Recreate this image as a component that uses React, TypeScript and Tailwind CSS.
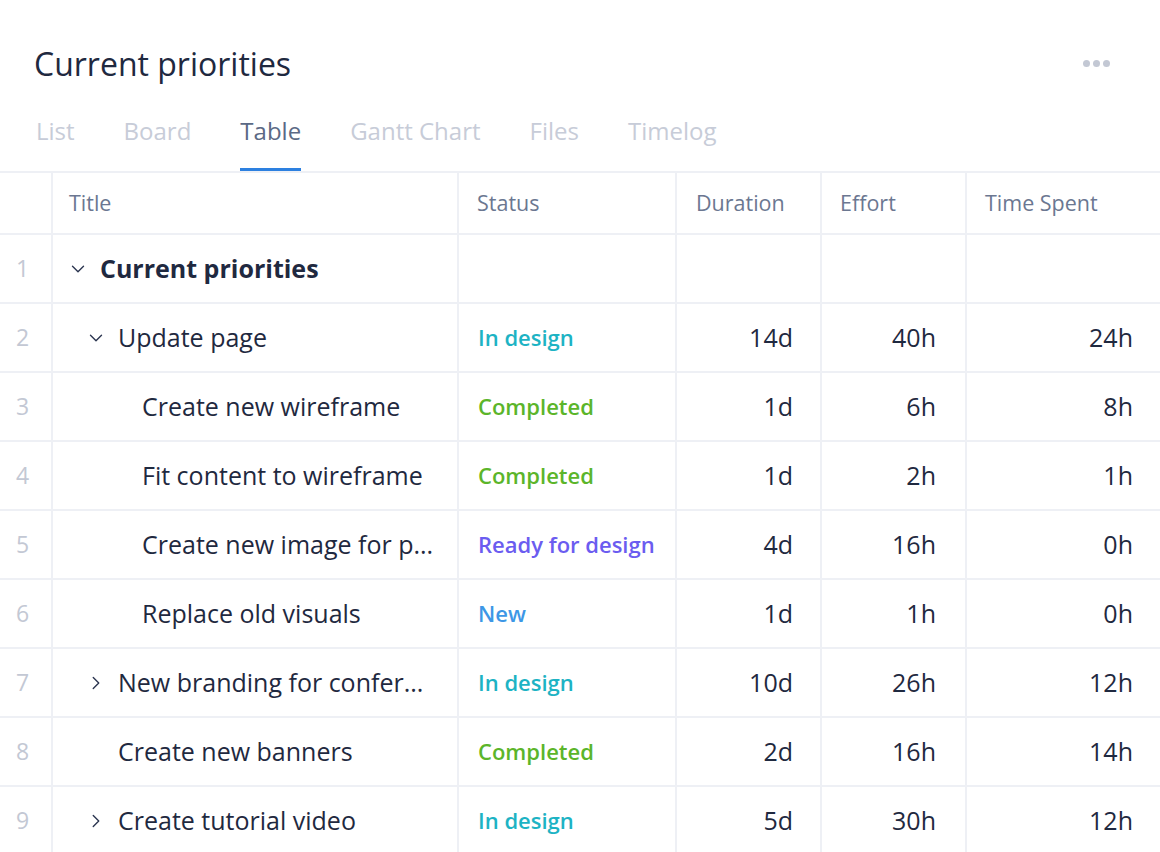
import { ChevronDown, ChevronRight } from 'lucide-react';

type Row = {
  n: number;
  title: string;
  level: 0 | 1 | 2;
  chevron?: 'down' | 'right';
  bold?: boolean;
  status?: string;
  dur?: string;
  eff?: string;
  spent?: string;
};

const rows: Row[] = [
  { n: 1, title: 'Current priorities', level: 0, chevron: 'down', bold: true },
  { n: 2, title: 'Update page', level: 1, chevron: 'down', status: 'In design', dur: '14d', eff: '40h', spent: '24h' },
  { n: 3, title: 'Create new wireframe', level: 2, status: 'Completed', dur: '1d', eff: '6h', spent: '8h' },
  { n: 4, title: 'Fit content to wireframe', level: 2, status: 'Completed', dur: '1d', eff: '2h', spent: '1h' },
  { n: 5, title: 'Create new image for p...', level: 2, status: 'Ready for design', dur: '4d', eff: '16h', spent: '0h' },
  { n: 6, title: 'Replace old visuals', level: 2, status: 'New', dur: '1d', eff: '1h', spent: '0h' },
  { n: 7, title: 'New branding for confer...', level: 1, chevron: 'right', status: 'In design', dur: '10d', eff: '26h', spent: '12h' },
  { n: 8, title: 'Create new banners', level: 1, status: 'Completed', dur: '2d', eff: '16h', spent: '14h' },
  { n: 9, title: 'Create tutorial video', level: 1, chevron: 'right', status: 'In design', dur: '5d', eff: '30h', spent: '12h' },
];

const statusColor: Record<string, string> = {
  'In design': 'text-[#1db3c4]',
  Completed: 'text-[#5bb52a]',
  'Ready for design': 'text-[#6b5cf0]',
  New: 'text-[#3d97e6]',
};

const cols = 'grid grid-cols-[53px_406px_218px_145px_145px_193px]';
const cell = 'border-r-2 border-[#eef0f5] last:border-r-0';

export default function App() {
  return (
    <div className="w-[1160px] h-[852px] overflow-hidden bg-white text-[#1f2940]" style={{ fontFamily: '"Open Sans", sans-serif' }}>
      <div className="flex items-start justify-between px-[34px] pt-[42px]">
        <h1 className="text-[32px] leading-[44px]">Current priorities</h1>
        <div className="flex gap-[3px] pt-[18px] pr-[16px]">
          <span className="w-[7px] h-[7px] rounded-full bg-[#c3c8d4]" />
          <span className="w-[7px] h-[7px] rounded-full bg-[#c3c8d4]" />
          <span className="w-[7px] h-[7px] rounded-full bg-[#c3c8d4]" />
        </div>
      </div>
      <div className="flex gap-[49px] px-[36px] mt-[27px] text-[24px] text-[#c7ccd8]">
        {['List', 'Board', 'Table', 'Gantt Chart', 'Files', 'Timelog'].map((t) => (
          <div key={t} className={`h-[58px] border-b-[3px] ${t === 'Table' ? 'border-[#2d80e0] text-[#5b6985]' : 'border-transparent'}`}>
            {t}
          </div>
        ))}
      </div>
      <div className="border-t-2 border-[#eef0f5]">
        <div className={`${cols} h-[62px] text-[21.5px] text-[#6b7791] border-b-2 border-[#eef0f5]`}>
          <div className={cell} />
          <div className={`${cell} flex items-center pl-[16px]`}>Title</div>
          <div className={`${cell} flex items-center pl-[18px]`}>Status</div>
          <div className={`${cell} flex items-center pl-[19px]`}>Duration</div>
          <div className={`${cell} flex items-center pl-[18px]`}>Effort</div>
          <div className={`${cell} flex items-center pl-[18px]`}>Time Spent</div>
        </div>
        {rows.map((r) => (
          <div key={r.n} className={`${cols} h-[69px] text-[25px] border-b-2 border-[#eef0f5]`}>
            <div className={`${cell} flex items-center pl-[16px] text-[23px] text-[#c3c8d4]`}>{r.n}</div>
            <div
              className={`${cell} flex items-center ${r.level === 0 ? 'pl-[14px]' : r.level === 1 ? 'pl-[32px]' : 'pl-[89px]'} ${r.bold ? 'font-bold' : ''}`}
            >
              {r.level < 2 && (
                <span className="w-[33px] flex items-center">
                  {r.chevron === 'down' && <ChevronDown size={22} strokeWidth={1.5} className="text-[#2b3550]" />}
                  {r.chevron === 'right' && <ChevronRight size={22} strokeWidth={1.5} className="text-[#2b3550]" />}
                </span>
              )}
              <span className="whitespace-nowrap">{r.title}</span>
            </div>
            <div className={`${cell} flex items-center pl-[19px] text-[22px] font-semibold ${r.status ? statusColor[r.status] : ''}`}>
              {r.status}
            </div>
            <div className={`${cell} flex items-center justify-end pr-[27px]`}>{r.dur}</div>
            <div className={`${cell} flex items-center justify-end pr-[29px]`}>{r.eff}</div>
            <div className={`${cell} flex items-center justify-end pr-[27px]`}>{r.spent}</div>
          </div>
        ))}
      </div>
    </div>
  );
}
